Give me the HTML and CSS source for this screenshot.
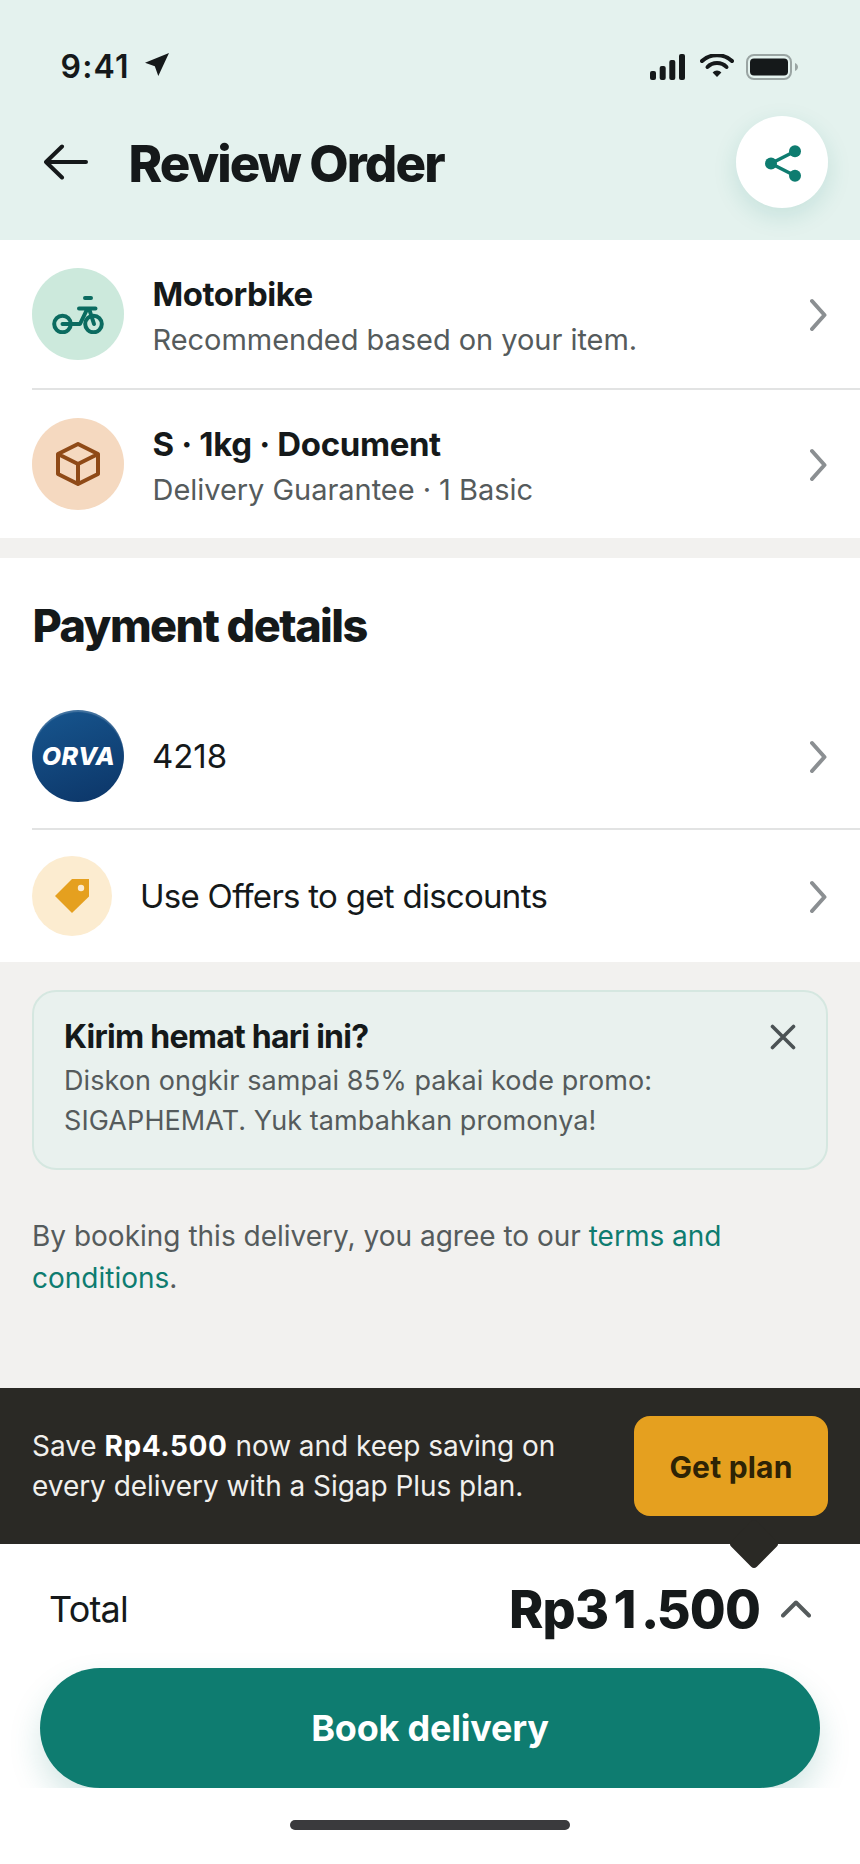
FILE: index.html
```html
<!DOCTYPE html>
<html lang="en">
<head>
<meta charset="utf-8">
<title>Review Order</title>
<link rel="stylesheet" href="styles.css">
</head>
<body>
<div class="screen">
  <header class="top">
    <div class="status">
      <span class="time">9:41</span>
      <svg class="location" width="24" height="24" viewBox="0 0 24 24"><path d="M24 0 13.3 23 9.8 13.3 0 9.8Z" fill="currentColor"/></svg>
      <span class="spacer"></span>
      <svg class="signal" width="35" height="26" viewBox="0 0 35 26" fill="currentColor"><rect x="0" y="17" width="6" height="9" rx="2"/><rect x="9.7" y="12" width="6" height="14" rx="2"/><rect x="19.3" y="6" width="6" height="20" rx="2"/><rect x="29" y="0" width="6" height="26" rx="2"/></svg>
      <svg class="wifi" width="34" height="24" viewBox="0 0 34 24"><g fill="none" stroke="currentColor" stroke-width="4" stroke-linecap="round"><path d="M2 7C10-.7 24-.7 32 7"/><path d="M7.500 13C12.500 7.700 21.500 7.700 26.500 13"/></g><path d="M12.600 18.500C15 15.800 19 15.800 21.400 18.500L17 23Z" fill="currentColor"/></svg>
      <svg class="battery" width="52" height="26" viewBox="0 0 52 26"><rect x="1" y="1" width="44" height="24" rx="7" fill="none" stroke="#9aa5a3" stroke-width="2"/><rect x="4" y="4.500" width="38" height="17" rx="4" fill="currentColor"/><path d="M49 9C51 10 52 11.500 52 13S51 16 49 17Z" fill="#9aa5a3"/></svg>
    </div>
    <div class="titlebar">
      <svg class="back" width="44" height="36" viewBox="0 0 44 36" fill="none" stroke="currentColor" stroke-width="4" stroke-linecap="round" stroke-linejoin="round"><path d="M42 18H2M18 2.500 2 18 18 33.500"/></svg>
      <h1 class="title">Review Order</h1>
      <button class="share" aria-label="Share"><svg width="36" height="37" viewBox="0 0 36 37"><path d="M30 6.200 6 18.500 30 30.800" fill="none" stroke="currentColor" stroke-width="3.500"/><g fill="currentColor"><circle cx="6" cy="18.500" r="6"/><circle cx="30" cy="6.200" r="6"/><circle cx="30" cy="30.800" r="6"/></g></svg></button>
    </div>
  </header>

  <section class="section">
    <div class="row">
      <span class="disc disc-green"><svg width="52" height="40" viewBox="0 0 52 40" fill="none" stroke="currentColor" stroke-width="4" stroke-linecap="round" stroke-linejoin="round"><circle cx="10.500" cy="30" r="8.300"/><circle cx="41.500" cy="30" r="8.300"/><path d="M33 4H39M27 14.500H43.500M10.500 30H28L35 15.500M37 14.500 42 30"/></svg></span>
      <div class="copy"><div class="name">Motorbike</div><div class="sub">Recommended based on your item.</div></div>
      <svg class="chevron" width="18" height="34" viewBox="0 0 18 34"><path d="M2 4 14.500 18 2 32"/></svg>
    </div>
    <div class="divider"></div>
    <div class="row">
      <span class="disc disc-orange"><svg width="44" height="44" viewBox="0 0 44 44" fill="none" stroke="currentColor" stroke-width="4" stroke-linejoin="round"><path d="M22 2 42 12V32L22 42 2 32V12ZM2 12 22 22 42 12M22 22V42"/></svg></span>
      <div class="copy"><div class="name name-size">S · 1kg · Document</div><div class="sub">Delivery Guarantee · 1 Basic</div></div>
      <svg class="chevron" width="18" height="34" viewBox="0 0 18 34"><path d="M2 4 14.500 18 2 32"/></svg>
    </div>
  </section>

  <section class="section payment">
    <h2 class="heading">Payment details</h2>
    <div class="row row-compact">
      <span class="disc disc-card">ORVA</span>
      <div class="label">4218</div>
      <svg class="chevron" width="18" height="34" viewBox="0 0 18 34"><path d="M2 4 14.500 18 2 32"/></svg>
    </div>
    <div class="divider"></div>
    <div class="row row-compact">
      <span class="disc disc-offer"><svg width="36" height="36" viewBox="0 0 36 36"><path d="M18 1H35V18.500L18 35 1 18Z" fill="#e5a01f"/><circle cx="27" cy="10" r="3.200" fill="#fcecd0"/></svg></span>
      <div class="label label-offer">Use Offers to get discounts</div>
      <svg class="chevron" width="18" height="34" viewBox="0 0 18 34"><path d="M2 4 14.500 18 2 32"/></svg>
    </div>
  </section>

  <main class="notes">
    <div class="promo">
      <div>
        <div class="promo-title">Kirim hemat hari ini?</div>
        <p class="promo-text">Diskon ongkir sampai 85% pakai kode promo:<br>SIGAPHEMAT. Yuk tambahkan promonya!</p>
      </div>
      <svg class="close" width="26" height="26" viewBox="0 0 26 26"><path d="M2.500 2.500 23.500 23.500M23.500 2.500 2.500 23.500"/></svg>
    </div>
    <p class="terms">By booking this delivery, you agree to our <a class="link">terms and<br>conditions</a>.</p>
  </main>

  <aside class="plan">
    <p class="plan-text">Save <b>Rp4.500</b> now and keep saving on<br>every delivery with a Sigap Plus plan.</p>
    <button class="plan-button">Get plan</button>
  </aside>

  <footer class="checkout">
    <div class="total">
      <span class="total-label">Total</span>
      <span class="amount">Rp<span class="wide">31</span><span class="tight">.</span>500</span>
      <svg class="expand" width="30" height="18" viewBox="0 0 30 18"><path d="M2 15.500 15 2.500 28 15.500"/></svg>
    </div>
    <button class="book">Book delivery</button>
  </footer>
  <div class="home"><span class="home-bar"></span></div>
</div>
</body>
</html>
```
FILE: styles.css
```css
* { box-sizing: border-box; }
body, h1, h2, p { margin: 0; }
body { background: #fff; color: #15191a; font-family: Inter, "Liberation Sans", sans-serif; }
button { border: 0; padding: 0; font-family: inherit; }
svg { display: block; flex: none; }

.screen { width: 860px; height: 1864px; display: flex; flex-direction: column; overflow: hidden; }

.top { height: 240px; flex: none; background: #e4f2ee; color: #15191a; }
.status { display: flex; align-items: center; height: 87px; padding: 47px 62px 0 60.500px; }
.time { font-size: 32px; font-weight: 600; line-height: 40px; letter-spacing: 1.200px; }
.location { margin: -4px 0 0 15px; }
.spacer { flex: 1; }
.wifi { margin: -2px 12px 0 15px; }
.titlebar { display: flex; align-items: center; height: 92px; margin-top: 29px; padding: 0 32px 0 44px; }
.title { flex: 1; margin-left: 40.500px; padding-top: 3px; font-size: 51px; line-height: 60px; font-weight: 800; letter-spacing: -1.900px; }
.share { width: 92px; height: 92px; border-radius: 50%; background: #fff; color: #0e7c70; display: flex; align-items: center; justify-content: center; box-shadow: 0 8px 24px rgba(14, 124, 112, .14); }
.share svg { margin: 2px 0 0 1px; }

.section { background: #fff; flex: none; }
.row { display: flex; align-items: center; padding: 28px 32px; }
.row-compact { padding: 26px 32px; }
.divider { height: 2px; margin-left: 32px; background: #e2e3e3; }
.disc { width: 92px; height: 92px; flex: none; border-radius: 50%; display: flex; align-items: center; justify-content: center; }
.disc-green { background: #cce9dc; color: #0b6b60; }
.disc-orange { background: #f5d9c0; color: #8f4a17; }
.disc-card { padding-left: 1px; background: linear-gradient(160deg, #17568f, #0c3567); box-shadow: inset 0 2px 1px rgba(255, 255, 255, .2); color: #fff; font-size: 25px; font-weight: 800; font-style: italic; letter-spacing: .400px; }
.disc-offer { width: 80px; height: 80px; background: #fcecd0; }
.copy { flex: 1; margin-left: 28.500px; padding-top: 4px; }
.name { font-size: 33px; line-height: 40px; font-weight: 700; letter-spacing: -.500px; }
.name-size { letter-spacing: -.360px; }
.sub { margin-top: 6px; margin-bottom: -1px; font-size: 29px; line-height: 40px; letter-spacing: -.040px; color: #555b5c; }
.chevron { fill: none; stroke: #8b8f92; stroke-width: 4; stroke-linecap: round; stroke-linejoin: round; }
.label { flex: 1; margin-left: 28px; font-size: 33px; line-height: 40px; letter-spacing: -.050px; }
.label-offer { letter-spacing: -.720px; }

.payment { margin-top: 20px; padding-top: 40px; position: relative; box-shadow: 0 -20px 0 #f2f1ef; }
.heading { padding-left: 32.500px; margin-bottom: 30px; font-size: 45px; line-height: 56px; font-weight: 800; letter-spacing: -1.530px; }

.notes { flex: none; height: 426px; padding: 28px 32px 0; background: #f2f1ef; }
.promo { display: flex; justify-content: space-between; height: 180px; padding: 25px 30px 25px; border: 2px solid #d5e7e0; border-radius: 24px; background: #e9f1ee; }
.promo-title { font-size: 32px; line-height: 40px; font-weight: 700; letter-spacing: -.740px; }
.promo-text { margin-top: 4px; font-size: 27px; line-height: 40px; letter-spacing: .080px; color: #555b5c; }
.close { margin-top: 7px; fill: none; stroke: #4b5254; stroke-width: 3.600; stroke-linecap: round; }
.terms { margin-top: 45px; font-size: 28px; line-height: 42px; color: #555b5c; }
.link { color: #0e7c70; }

.plan { position: relative; flex: none; height: 156px; padding: 0 32px; display: flex; align-items: center; justify-content: space-between; background: #2a2925; color: #f1f0ed; }
.plan::after { content: ""; position: absolute; z-index: 1; right: 88px; bottom: -18px; width: 36px; height: 36px; border-radius: 4px; background: #2a2925; transform: rotate(45deg); }
.plan-text { font-size: 28px; line-height: 40px; letter-spacing: -.040px; }
.plan-text b { color: #fff; font-weight: 700; letter-spacing: .600px; }
.plan-button { width: 194px; height: 100px; padding-top: 2px; border-radius: 16px; background: #e5a01f; color: #2e2305; font-size: 30px; font-weight: 700; letter-spacing: .200px; }

.checkout { flex: none; height: 244px; padding: 33px 40px 0; background: #fff; overflow: hidden; }
.total { display: flex; align-items: center; height: 64px; margin-bottom: 27px; padding: 0 9px; line-height: 64px; }
.total-label { flex: 1; font-size: 36px; letter-spacing: -.790px; }
.amount { padding-top: 1px; font-size: 52px; font-weight: 800; letter-spacing: -.900px; }
.wide { letter-spacing: 4.500px; }
.tight { letter-spacing: -2.500px; }
.expand { margin-left: 21px; fill: none; stroke: #555b5c; stroke-width: 4; stroke-linecap: round; stroke-linejoin: round; }
.book { width: 780px; height: 120px; border-radius: 60px; background: #0e7c70; color: #fff; font-size: 36px; font-weight: 700; letter-spacing: -.220px; box-shadow: 0 16px 32px rgba(14, 124, 112, .18); }

.home { flex: none; height: 76px; padding-top: 32px; background: #fff; }
.home-bar { display: block; width: 280px; height: 10px; margin: 0 auto; border-radius: 5px; background: #3a3a3d; }
```
